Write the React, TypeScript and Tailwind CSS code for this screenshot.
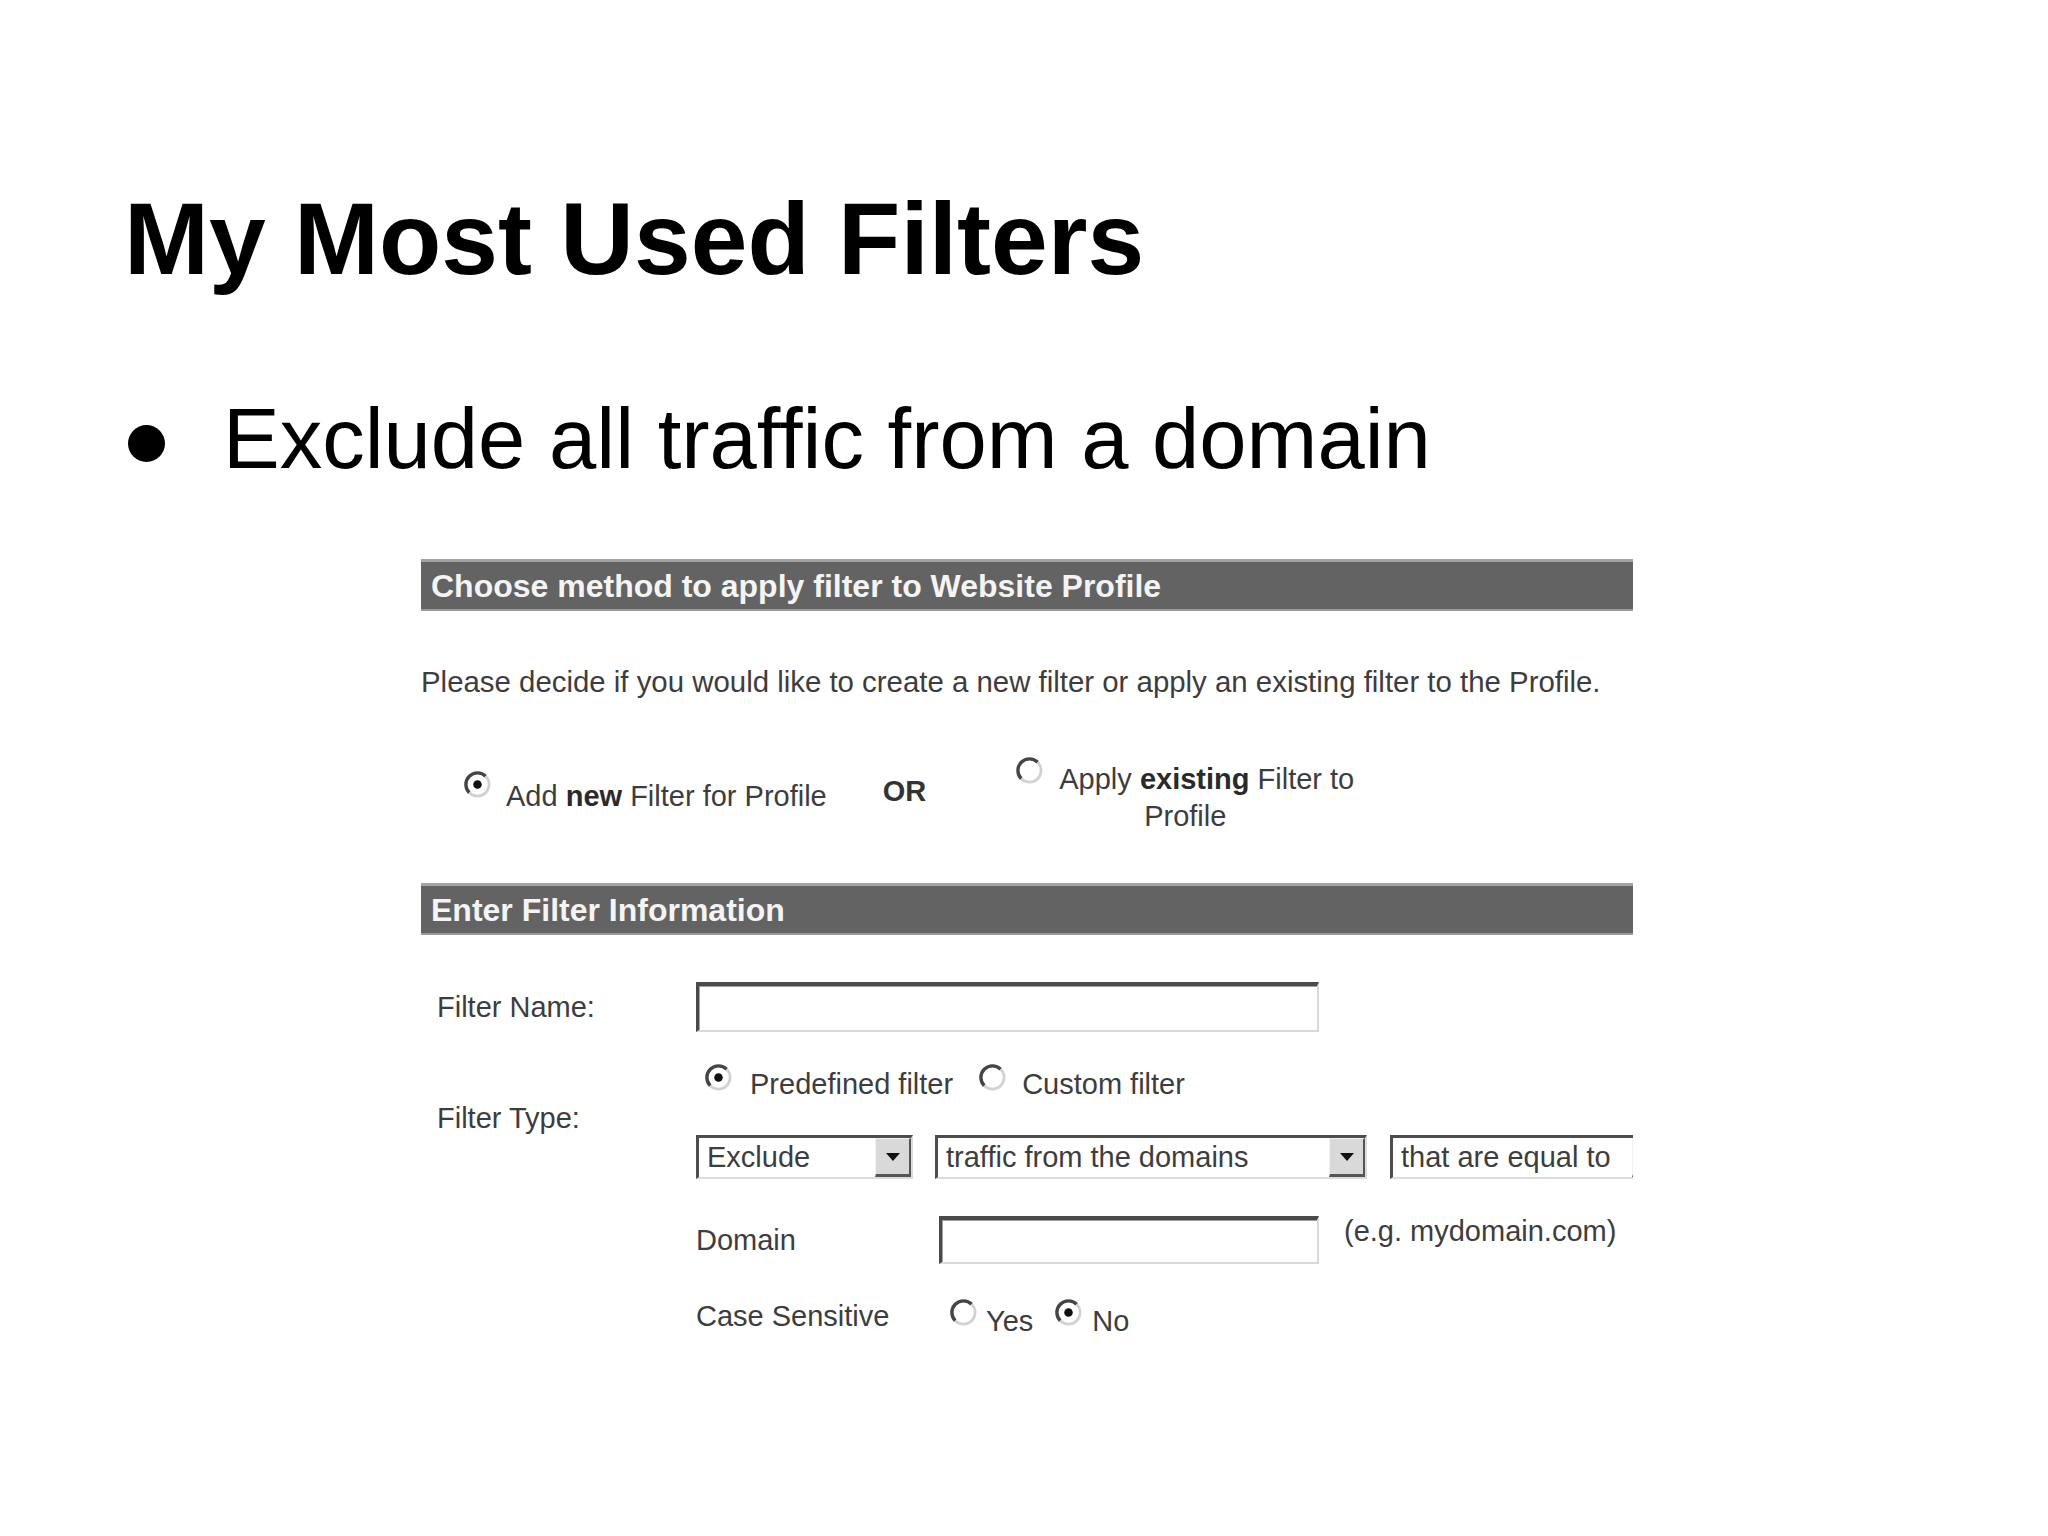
import React from "react";

// Windows-classic style radio, drawn like the old GA screenshot
function Radio({ checked = false, className = "" }: { checked?: boolean; className?: string }) {
  return (
    <svg viewBox="0 0 24 24" className={`h-[27px] w-[27px] shrink-0 ${className}`}>
      <circle cx="12" cy="12" r="10.3" fill="#fff" />
      <path d="M4.7 19.3A10.3 10.3 0 0 1 19.3 4.7" fill="none" stroke="#454545" strokeWidth="3" />
      <path d="M19.3 4.7A10.3 10.3 0 0 1 4.7 19.3" fill="none" stroke="#d2d2d2" strokeWidth="2.4" />
      {checked && <circle cx="12" cy="12" r="3.8" fill="#111" />}
    </svg>
  );
}

function SectionBar({ title }: { title: string }) {
  return (
    <div className="flex h-[52px] shrink-0 items-center border-t-[3px] border-b-2 border-t-[#a3a3a3] border-b-[#9a9a9a] bg-[#636363] pl-[10px] text-[32px] font-bold text-[#f4f4f4]">
      {title}
    </div>
  );
}

function TextBox({ className = "" }: { className?: string }) {
  return (
    <div
      className={`shrink-0 border-t-[4px] border-l-[3px] border-r-2 border-b-2 border-t-[#4a4a4a] border-l-[#4a4a4a] border-r-[#d9d9d9] border-b-[#d9d9d9] bg-white shadow-[inset_1px_1px_0_#a0a0a0] ${className}`}
    />
  );
}

function Select({ label, className = "" }: { label: string; className?: string }) {
  return (
    <div
      className={`flex h-[44px] shrink-0 border-t-[3px] border-l-[3px] border-r-2 border-b-2 border-t-[#4d4d4d] border-l-[#4d4d4d] border-r-[#dcdcdc] border-b-[#dcdcdc] bg-white ${className}`}
    >
      <span className="flex-1 overflow-hidden whitespace-nowrap pl-[8px] text-[29px] leading-[39px]">{label}</span>
      <div className="flex w-[36px] shrink-0 items-center justify-center border-t border-l border-r-2 border-b-[3px] border-t-[#f2f2f2] border-l-[#f2f2f2] border-r-[#555] border-b-[#555] bg-[#d9d9d9]">
        <svg viewBox="0 0 14 8" className="h-[8px] w-[14px]">
          <polygon points="0,0 14,0 7,8" fill="#111" />
        </svg>
      </div>
    </div>
  );
}

export default function App() {
  return (
    <div className="h-[1536px] w-[2048px] overflow-hidden bg-white font-['Liberation_Sans',Arial,sans-serif]">
      <div className="pl-[124px] pt-[188px]">
        <h1 className="text-[102px] font-bold leading-none text-black">My Most Used Filters</h1>

        <div className="mt-[106px] flex items-start">
          <span className="ml-[4px] mt-[29px] h-[37px] w-[37px] shrink-0 rounded-full bg-black" />
          <p className="ml-[58px] text-[85px] leading-none text-black">Exclude all traffic from a domain</p>
        </div>

        {/* screenshot of the GA filter form */}
        <div className="ml-[297px] mt-[78px] flex h-[778px] w-[1212px] flex-col overflow-hidden text-[29px] text-[#3d3d3d]">
          <SectionBar title="Choose method to apply filter to Website Profile" />

          <p className="mt-[53px] text-[29.4px] leading-[35px]">
            Please decide if you would like to create a new filter or apply an existing filter to the Profile.
          </p>

          <div className="mt-[60px] flex h-[74px] shrink-0 items-center">
            <div className="ml-[43px] flex items-center">
              <Radio checked className="mb-[24px]" />
              <span className="ml-[15px] leading-[37px]">
                Add <b className="text-[#2a2a2a]">new</b> Filter for Profile
              </span>
            </div>
            <span className="mb-[10px] ml-[56px] font-bold leading-[37px] text-[#333]">OR</span>
            <div className="ml-[79px] w-[360px] text-center leading-[37px]">
              <Radio className="inline-block align-[5px]" />
              <span className="ml-[16px]">
                Apply <b className="text-[#2a2a2a]">existing</b> Filter to
              </span>
              <br />
              Profile
            </div>
          </div>

          <div className="mt-[50px]">
            <SectionBar title="Enter Filter Information" />
          </div>

          <div className="mt-[47px] flex h-[50px] shrink-0 items-center">
            <span className="w-[275px] shrink-0 pl-[16px] leading-[35px]">Filter Name:</span>
            <TextBox className="h-[50px] w-[623px]" />
          </div>

          <div className="mt-[26px] flex shrink-0 items-center">
            <span className="w-[275px] shrink-0 pl-[16px] leading-[35px]">Filter Type:</span>
            <div className="flex flex-col">
              <div className="flex h-[44px] items-end">
                <Radio checked className="mb-[11px] ml-[9px]" />
                <span className="ml-[18px] leading-[35px]">Predefined filter</span>
                <Radio className="mb-[11px] ml-[26px]" />
                <span className="ml-[16px] leading-[35px]">Custom filter</span>
              </div>
              <div className="mt-[33px] flex">
                <Select label="Exclude" className="w-[217px]" />
                <Select label="traffic from the domains" className="ml-[22px] w-[432px]" />
                <Select label="that are equal to" className="ml-[23px] w-[280px]" />
              </div>
            </div>
          </div>

          <div className="mt-[37px] flex h-[48px] shrink-0 items-center pl-[275px]">
            <span className="w-[243px] shrink-0 leading-[35px]">Domain</span>
            <TextBox className="h-[48px] w-[380px]" />
            <span className="mb-[18px] ml-[25px] whitespace-nowrap leading-[35px]">(e.g. mydomain.com)</span>
          </div>

          <div className="mt-[35px] flex shrink-0 items-start pl-[275px]">
            <span className="w-[254px] shrink-0 leading-[35px]">Case Sensitive</span>
            <Radio className="h-[26px] w-[26px]" />
            <span className="ml-[9px] mt-[5px] leading-[35px]">Yes</span>
            <Radio checked className="ml-[22px] h-[26px] w-[26px]" />
            <span className="ml-[10px] mt-[5px] leading-[35px]">No</span>
          </div>
        </div>
      </div>
    </div>
  );
}
